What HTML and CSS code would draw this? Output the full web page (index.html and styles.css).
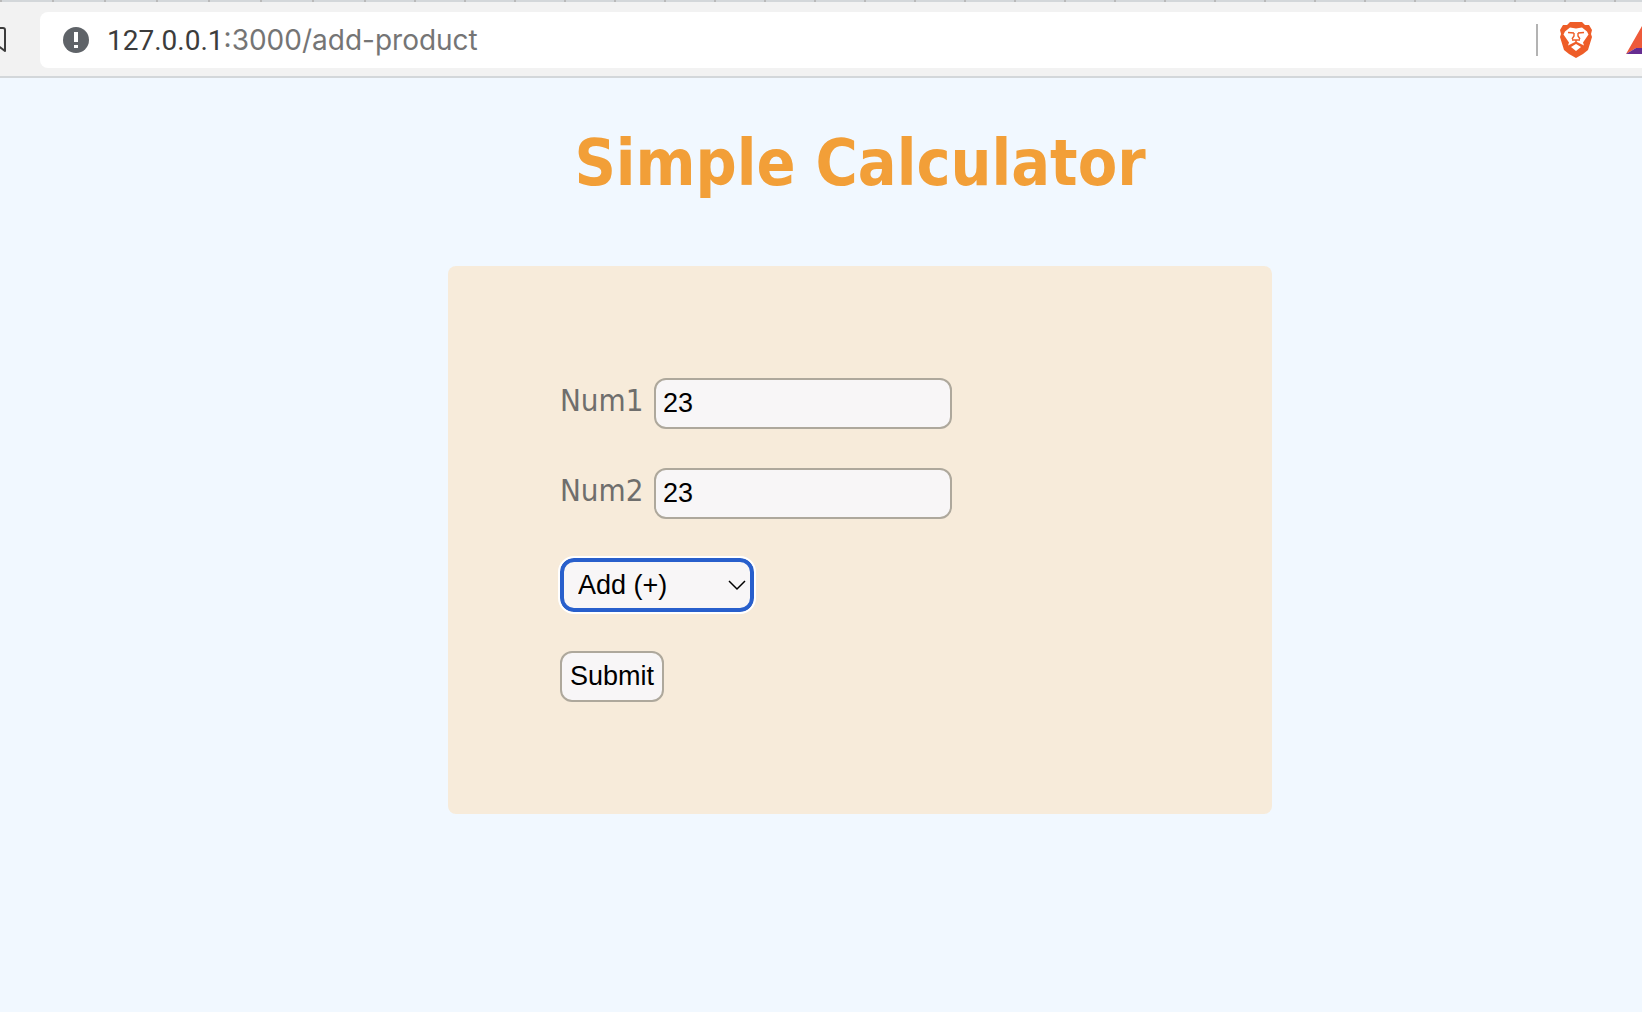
FILE: index.html
```html
<!DOCTYPE html>
<html lang="en">
<head>
<meta charset="utf-8">
<title>Simple Calculator</title>
<link rel="stylesheet" href="styles.css">
</head>
<body>
<header class="browser">
  <div class="tabstrip"></div>
  <div class="toolbar">
    <svg class="bookmark" width="8" height="28" viewBox="0 0 8 28" fill="none" stroke="#3c3c3c" stroke-width="2" stroke-linejoin="round" aria-hidden="true"><path d="M-8 2H3Q5 2 5 4V25L-3 19"/></svg>
    <div class="address">
      <svg class="info" width="26" height="26" viewBox="0 0 26 26" aria-hidden="true"><circle cx="13" cy="13" r="13" fill="#5f6368"/><path d="M11 5h4v10h-4zM11 18h4v3h-4z" fill="#fff"/></svg>
      <span class="url"><span class="host">127.0.0.1</span>:3000/add-product</span>
      <span class="divider"></span>
      <svg class="lion" width="32" height="36" viewBox="0 0 32 36" aria-hidden="true">
        <path d="M10 0h12l3 3 4 0 3 5-1 4 1 3-4 13-5 4-7 4-7-4-5-4-4-13 1-3-1-4 3-5h4z" fill="#ee5d28"/>
        <path d="M10 5.500l6 1 6-1 5 4 1.500 3-5.500 8 1 3-8-4-8 4 1-3-5.500-8 1.500-3z" fill="#fff"/>
        <path d="M16 22l5 3-5 4-5-4z" fill="#fff"/>
        <path d="M8 10.500l6 .5M24 10.500l-6 .5M14 11v3l-2 3M18 11v3l2 3M12 18h8M16 18v4" fill="none" stroke="#ee5d28" stroke-width="1.400"/>
      </svg>
      <svg class="bat" width="16" height="30" viewBox="0 0 16 30" aria-hidden="true"><path d="M0 29L16 1V23H10z" fill="#ee5a3a"/><path d="M0 29l10-6h6v6z" fill="#662d91"/></svg>
    </div>
  </div>
</header>
<main class="page">
  <h1 class="title">Simple Calculator</h1>
  <form class="card">
    <div class="row"><label class="label" for="num1">Num1</label><input class="control field" id="num1" type="text" value="23"></div>
    <div class="row"><label class="label" for="num2">Num2</label><input class="control field" id="num2" type="text" value="23"></div>
    <div class="select">
      <select class="control operation" aria-label="Operation"><option>Add (+)</option><option>Subtract (-)</option></select>
      <svg class="chevron" width="18" height="12" viewBox="0 0 18 12" fill="none" stroke="#000" stroke-width="1.500" aria-hidden="true"><path d="M1 1l8 8 8-8"/></svg>
    </div>
    <button class="control submit" type="button">Submit</button>
  </form>
</main>
</body>
</html>
```
FILE: styles.css
```css
* { box-sizing: border-box; }
body {
  margin: 0;
  min-height: 100vh;
  background: #f1f8ff;
  overflow-x: hidden;
}
.browser { border-bottom: 2px solid #d3d7da; background: #f2f2f2; }
.tabstrip {
  height: 2px;
  background:
    repeating-linear-gradient(90deg, #b9b9b9 0 2px, transparent 2px 52px) 0 0 / 366px 2px no-repeat,
    repeating-linear-gradient(90deg, #b9b9b9 0 2px, transparent 2px 50px) 364px 0 no-repeat,
    #d3d7da;
}
.toolbar {
  display: flex;
  align-items: center;
  gap: 32px;
  padding: 10px 0 8px;
}
.bookmark { flex: none; }
.address {
  flex: 1;
  display: flex;
  align-items: center;
  height: 56px;
  padding-left: 23px;
  background: #fff;
  border-radius: 8px 0 0 8px;
}
.url {
  margin: 0 auto 0 18px;
  font: 28px/36px Inter, Roboto, sans-serif;
  color: #757575;
}
.host { font-family: Roboto, sans-serif; color: #3c3c3c; }
.divider { width: 2px; height: 32px; background: #b3b3b3; }
.lion { margin: 0 34px 0 22px; }
.page {
  display: flex;
  flex-direction: column;
  align-items: center;
  padding: 44px 0 48px 78px;
}
.title {
  margin: 0 0 62px;
  font: bold 64px/82px "DejaVu Sans Condensed", "DejaVu Sans", sans-serif;
  color: #f29f38;
  white-space: nowrap;
}
.card {
  display: flex;
  flex-direction: column;
  align-items: flex-start;
  gap: 39px;
  width: 824px;
  max-width: 100%;
  padding: 112px;
  background: #f7ebda;
  border-radius: 8px;
}
.row { display: flex; }
.label {
  width: 94px;
  font: 31px/44px "DejaVu Sans Condensed", "DejaVu Sans", sans-serif;
  color: #6f6e6c;
}
.control {
  height: 51px;
  margin: 0;
  border: 2px solid #aea89c;
  border-radius: 12px;
  background: #f8f6f7;
  color: #000;
  font: 27px/32px "Liberation Sans", Arial, sans-serif;
}
.field { width: 298px; padding: 0 7px; }
.select { position: relative; }
.operation {
  display: block;
  appearance: none;
  width: 194px;
  height: 54px;
  padding: 0 14px;
  border: 4px solid #285fcc;
  border-radius: 14px;
  outline: 2px solid #fff;
}
.chevron { position: absolute; right: 8px; top: 22px; pointer-events: none; }
.submit { padding: 0 8px 2px; }
```
